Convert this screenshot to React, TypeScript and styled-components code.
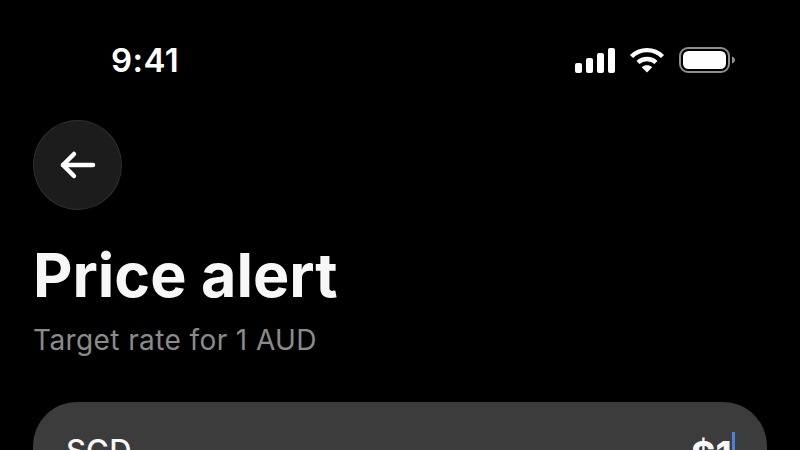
import React from 'react';
import styled, { createGlobalStyle } from 'styled-components';

const GlobalStyle = createGlobalStyle`
  html, body {
    margin: 0;
    padding: 0;
    background: #000;
    overflow: hidden;
  }
`;

const Screen = styled.div`
  width: 800px;
  height: 450px;
  overflow: hidden;
  background: #000;
  color: #f7f7f7;
  font-family: Inter, 'Liberation Sans', sans-serif;
`;

const StatusBar = styled.div`
  height: 120px;
  box-sizing: border-box;
  padding: 40px 65px 0 111px;
  display: flex;
  justify-content: space-between;
  align-items: flex-start;
`;

const Clock = styled.div`
  font-size: 33px;
  line-height: 40px;
  font-weight: 600;
  letter-spacing: 0.4px;
  color: #fff;
`;

const StatusIcons = styled.div`
  display: flex;
  align-items: center;
  gap: 14px;
  height: 40px;
`;

const Content = styled.div`
  padding: 0 33px;
`;

const BackButton = styled.button`
  width: 89px;
  height: 90px;
  padding: 0;
  border-radius: 50%;
  border: 1px solid #2f2f2f;
  background: #1c1c1d;
  display: flex;
  align-items: center;
  justify-content: center;
`;

const Title = styled.h1`
  margin: 27px 0 0;
  font-size: 61px;
  line-height: 76px;
  font-weight: 700;
  letter-spacing: 0;
  color: #f7f7f7;
`;

const Subtitle = styled.p`
  margin: 9px 0 0;
  font-size: 28px;
  line-height: 36px;
  font-weight: 400;
  letter-spacing: 0.4px;
  color: #8b8b8b;
`;

const RateCard = styled.div`
  margin-top: 44px;
  height: 120px;
  box-sizing: border-box;
  padding: 31px 32px 0 33px;
  border-radius: 44px;
  background: #3c3c3d;
  display: flex;
  justify-content: space-between;
`;

const Currency = styled.span`
  font-size: 31px;
  line-height: 36px;
  font-weight: 500;
  color: #f7f7f7;
`;

const Amount = styled.span`
  font-size: 38px;
  line-height: 46px;
  font-weight: 700;
  margin-top: -1px;
  color: #f7f7f7;
  border-right: 3px solid #4d7fe0;
  height: 40px;
`;

export default function App() {
  return (
    <Screen>
      <GlobalStyle />
      <StatusBar>
        <Clock>9:41</Clock>
        <StatusIcons>
          <svg width="40" height="25" viewBox="0 0 40 25" fill="#fff">
            <rect x="0" y="15" width="7" height="10" rx="2" />
            <rect x="11" y="10" width="7" height="15" rx="2" />
            <rect x="22" y="5" width="7" height="20" rx="2" />
            <rect x="33" y="0" width="7" height="25" rx="2" />
          </svg>
          <svg width="36" height="26" viewBox="0 0 36 26" fill="none" stroke="#fff" strokeWidth="4.4">
            <path d="M2.5 9.5C11 1 25 1 33.5 9.5" />
            <path d="M9 15.5c5-4.7 13-4.7 18 0" />
            <path d="M18 25.5l-5.2-5.2c3-2.6 7.400-2.600 10.400 0z" fill="#fff" stroke="none" />
          </svg>
          <svg width="56" height="26" viewBox="0 0 56 26" fill="none">
            <rect x="1" y="1" width="49" height="24" rx="8" stroke="#8e8e8e" strokeWidth="2" />
            <rect x="4" y="4" width="43" height="18" rx="5.500" fill="#fff" />
            <path d="M53 9.500c2 .6 3 2 3 3.500s-1 2.900-3 3.500z" fill="#8e8e8e" />
          </svg>
        </StatusIcons>
      </StatusBar>
      <Content>
        <BackButton aria-label="Back">
          <svg width="40" height="40" viewBox="0 0 40 40" fill="none" stroke="#fff" strokeWidth="4.500" strokeLinecap="round" strokeLinejoin="round">
            <path d="M5 20h30" />
            <path d="M16 9L5 20l11 11" />
          </svg>
        </BackButton>
        <Title>Price alert</Title>
        <Subtitle>Target rate for 1 AUD</Subtitle>
        <RateCard>
          <Currency>SGD</Currency>
          <Amount>$1</Amount>
        </RateCard>
      </Content>
    </Screen>
  );
}
